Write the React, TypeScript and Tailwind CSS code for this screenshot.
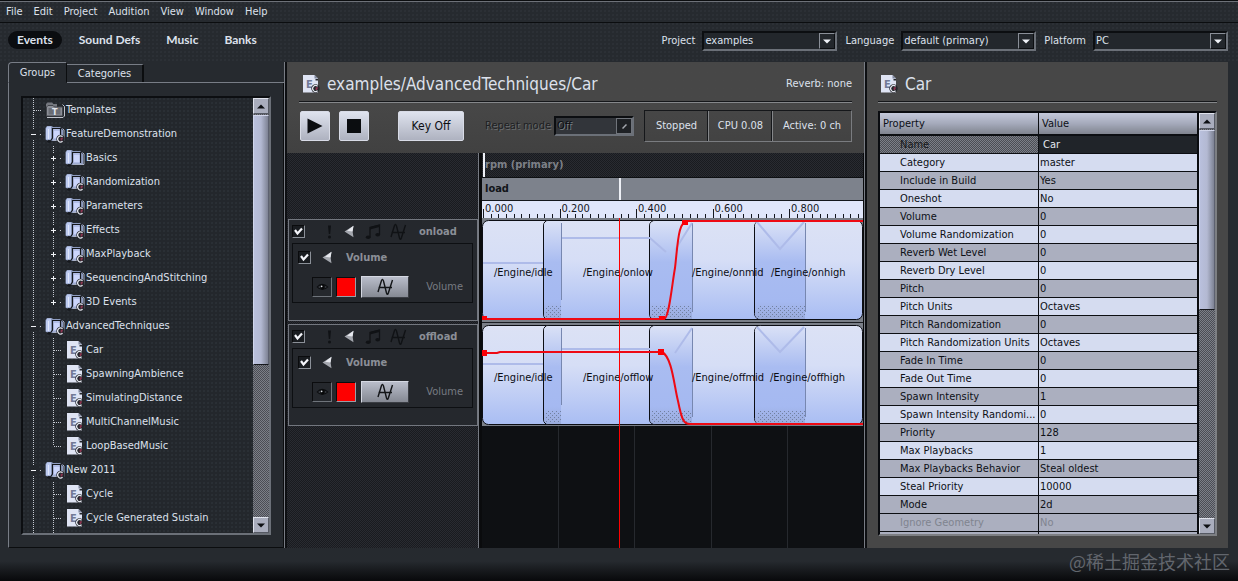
import React from "react";

const FONT = "font-['DejaVu_Sans_Condensed','DejaVu_Sans',sans-serif]";

const DOTS =
  "bg-[radial-gradient(circle_at_1px_1px,#2e3339_0.6px,transparent_0.9px)] bg-[length:4px_4px]";
const CHECKER =
  "bg-[repeating-conic-gradient(#4b4d54_0_25%,#7c7f88_0_50%)] bg-[length:2px_2px]";
const MESH =
  "bg-[repeating-conic-gradient(#191b1f_0_25%,#292b31_0_50%)] bg-[length:2px_2px]";
const SUNKEN =
  "border-2 border-t-[#0c0e11] border-l-[#0c0e11] border-r-[#6b7078] border-b-[#6b7078]";

/* ---------- icons ---------- */

function Badge({ x, y }: { x: number; y: number }) {
  return (
    <g transform={`translate(${x} ${y})`}>
      <circle cx="3.5" cy="3.5" r="4.2" fill="#23262b" />
      <path d="M5.6 1.2 A3 3 0 1 0 5.6 5.8" fill="none" stroke="#e4e6ee" strokeWidth="1.2" />
      <path d="M3.6 2.2 H6.2 L5 5 H3.6 Z" fill="#8c3550" />
    </g>
  );
}

function FolderIcon({ badge = true }: { badge?: boolean }) {
  return (
    <svg width="20" height="19" viewBox="0 0 20 19" aria-hidden="true" className="shrink-0">
      <path d="M0.5 3 L2 1 H6.5 L8 2 H15 L18 5 V16 H3 L0.5 14.5 Z" fill="#8d9bbf" />
      <path d="M1 3.5 L2.5 1.5 H6 V14.5 H1 Z" fill="#bccaf0" />
      <path d="M3.5 4 V14" stroke="#dfe6fb" />
      <path d="M7 4 H16 V14.5 H7 Z" fill="#b1bde6" />
      <path d="M9 6 H15 V13 H9 Z" fill="#cbd5fb" />
      <path d="M7 3.5 H16.5" stroke="#15181c" />
      <path d="M7.5 3 V13 L5.5 16 M15.5 4 V14" fill="none" stroke="#15181c" strokeWidth="1.2" />
      <ellipse cx="4" cy="16.3" rx="1.9" ry="1.4" fill="#15181c" />
      <path d="M17.5 3.5 L19 5 V15.5 H8" fill="none" stroke="#a9b1c6" />
      {badge && <Badge x={12} y={10.5} />}
    </svg>
  );
}

function TemplateIcon() {
  return (
    <svg width="20" height="19" viewBox="0 0 20 19" aria-hidden="true" className="shrink-0">
      <path d="M1 3 L2.5 1.5 H7 L8.5 3 H12 V12 H1 Z" fill="#74777e" />
      <path d="M1.5 6 L3 4.5 H8 L9.5 6 H17.5 V15 H1.5 Z" fill="#8c8f97" stroke="#42454b" />
      <path d="M3.5 7 H15.5 V13.5 H3.5 Z" fill="#6a6d74" />
      <path d="M2 16.5 H18 L19.5 15 V5.5 L17.5 3.5" fill="none" stroke="#c2c5cd" />
      <text x="7" y="13.5" fontSize="9" fontWeight="bold" fill="#e3e5ec">T</text>
    </svg>
  );
}

function EventIcon() {
  return (
    <svg width="18" height="20" viewBox="0 0 18 20" aria-hidden="true" className="shrink-0">
      <path d="M1 1 H12.5 L16 4.5 V18.5 H1 Z" fill="#dfe4f4" />
      <path d="M12.5 1 V4.5 H16 Z" fill="#7e859b" />
      <path d="M13.5 5 H16 V6.5 H13.5 Z" fill="#23262b" />
      <text x="4" y="14" fontSize="11" fontWeight="bold" fill="#727a96">E</text>
      <Badge x={10} y={11} />
    </svg>
  );
}

function WaveIcon({ color = "#131518" }: { color?: string }) {
  return (
    <svg width="17" height="18" viewBox="0 0 17 18" aria-hidden="true" className="shrink-0">
      <path
        d="M1 14 L4.5 2.5 Q5.5 0 6.5 3 L9.5 15 Q10.5 18 11.5 14.5 L15.5 2 M1.5 9.5 H15"
        fill="none"
        stroke={color}
        strokeWidth="1.4"
      />
    </svg>
  );
}

function SpeakerIcon() {
  return (
    <svg width="11" height="13" viewBox="0 0 11 13" aria-hidden="true" className="shrink-0">
      <path d="M0.5 6.5 L9.5 0.8 L8.6 6.5 L9.5 12.2 Z" fill="#a4a7ae" />
      <path d="M3 5.8 L9.5 0.8 L8.6 6.5 Z" fill="#e6e8ee" />
    </svg>
  );
}

function NotesIcon() {
  return (
    <svg width="17" height="16" viewBox="0 0 17 16" aria-hidden="true" className="shrink-0">
      <path d="M5 13 V3.5 L14.5 1 V10.5" fill="none" stroke="#101215" strokeWidth="1.3" />
      <path d="M5 3 L14.5 0.5 V3 L5 5.5 Z" fill="#101215" />
      <ellipse cx="3.2" cy="13.3" rx="2.4" ry="1.8" fill="#101215" />
      <ellipse cx="12.7" cy="10.8" rx="2.4" ry="1.8" fill="#101215" />
    </svg>
  );
}

function BangIcon() {
  return (
    <svg width="5" height="14" viewBox="0 0 5 14" aria-hidden="true" className="shrink-0">
      <path d="M1 0.5 H4 L3.2 9 H1.8 Z" fill="#101215" />
      <circle cx="2.5" cy="12" r="1.5" fill="#101215" />
    </svg>
  );
}

function EyeIcon() {
  return (
    <svg width="13" height="10" viewBox="0 0 13 10" aria-hidden="true">
      <path d="M0.5 5 Q6 -1.5 12.5 5 Q6 11 0.5 5 Z" fill="#0c0e10" />
      <path d="M2 5 Q6 1.5 11 5 Q6 8.5 2 5 Z" fill="#3a3e44" />
      <circle cx="6.5" cy="5" r="2.4" fill="#08090a" />
      <circle cx="5.6" cy="4.3" r="0.9" fill="#dfe3ea" />
    </svg>
  );
}

function Triangle({ up = false, color = "#0d0f13" }: { up?: boolean; color?: string }) {
  return (
    <svg width="8" height="5" viewBox="0 0 8 5" aria-hidden="true">
      <path d={up ? "M0 4.5 L4 0.5 L8 4.5 Z" : "M0 0.5 H8 L4 4.5 Z"} fill={color} />
    </svg>
  );
}

/* ---------- shared controls ---------- */

function Scrollbar({ thumb }: { thumb: string }) {
  const arrow =
    "flex h-4 w-full shrink-0 items-center justify-center border border-t-[#dfe2ec] border-l-[#dfe2ec] border-r-[#555963] border-b-[#555963] bg-[#a9adbd]";
  return (
    <div className={`flex w-4 shrink-0 flex-col ${CHECKER}`}>
      <button type="button" aria-label="Scroll up" className={arrow}>
        <Triangle up />
      </button>
      <div className="flex-1 pt-px">
        <div
          className={`${thumb} border border-l-[#d0d5ea] border-t-[#d0d5ea] border-r-[#5d6170] border-b-[#15171b] bg-linear-to-r from-[#b9c0dd] via-[#b3b9d2] to-[#7e8394]`}
        />
      </div>
      <button type="button" aria-label="Scroll down" className={arrow}>
        <Triangle />
      </button>
    </div>
  );
}

function Combo({ id, label, value }: { id: string; label: string; value: string }) {
  return (
    <div className="flex items-center gap-[7px]">
      <label htmlFor={id}>{label}</label>
      <div className={`relative h-5 w-[135px] bg-[#23272c] ${SUNKEN}`}>
        <select id={id} defaultValue={value} className="block h-4 w-full appearance-none bg-transparent pl-px leading-4 outline-none">
          <option className="bg-[#23272c]">{value}</option>
        </select>
        <span className="pointer-events-none absolute top-0 right-0 flex h-4 w-4 items-center justify-center border border-t-[#8a8f98] border-l-[#8a8f98] border-r-[#0c0e11] border-b-[#0c0e11] bg-[#23272c]">
          <Triangle color="#f0f2f8" />
        </span>
      </div>
    </div>
  );
}

function TickBox({ label }: { label: string }) {
  return (
    <span className="relative flex h-[13px] w-[13px] shrink-0">
      <input
        type="checkbox"
        defaultChecked
        aria-label={label}
        className="peer h-[13px] w-[13px] appearance-none border border-t-[#0a0b0d] border-l-[#0a0b0d] border-r-[#8b9098] border-b-[#8b9098] bg-[#191c20]"
      />
      <svg width="13" height="13" viewBox="0 0 13 13" aria-hidden="true" className="pointer-events-none absolute inset-0 hidden peer-checked:block">
        <path d="M3 5 L5.5 8.5 L10 3.5" fill="none" stroke="#f4f5fa" strokeWidth="2.2" />
      </svg>
    </span>
  );
}

/* ---------- left panel ---------- */

type Node = { name: string; level: 1 | 2; kind: "template" | "folder" | "plain" | "event"; last?: boolean };

const TREE: Node[] = [
  { name: "Templates", level: 1, kind: "template" },
  { name: "FeatureDemonstration", level: 1, kind: "folder" },
  { name: "Basics", level: 2, kind: "plain" },
  { name: "Randomization", level: 2, kind: "folder" },
  { name: "Parameters", level: 2, kind: "folder" },
  { name: "Effects", level: 2, kind: "folder" },
  { name: "MaxPlayback", level: 2, kind: "folder" },
  { name: "SequencingAndStitching", level: 2, kind: "folder" },
  { name: "3D Events", level: 2, kind: "folder", last: true },
  { name: "AdvancedTechniques", level: 1, kind: "folder" },
  { name: "Car", level: 2, kind: "event" },
  { name: "SpawningAmbience", level: 2, kind: "event" },
  { name: "SimulatingDistance", level: 2, kind: "event" },
  { name: "MultiChannelMusic", level: 2, kind: "event" },
  { name: "LoopBasedMusic", level: 2, kind: "event", last: true },
  { name: "New 2011", level: 1, kind: "folder" },
  { name: "Cycle", level: 2, kind: "event" },
  { name: "Cycle Generated Sustain", level: 2, kind: "event" },
  { name: "", level: 2, kind: "event" },
];

function Guide({ mark, last, stub = true }: { mark?: "+" | "-"; last?: boolean; stub?: boolean }) {
  return (
    <svg width="20" height="24" viewBox="0 0 20 24" aria-hidden="true" className="shrink-0">
      <path d={last ? "M8.5 0 V12" : "M8.5 0 V24"} stroke="#c4c8d0" strokeDasharray="1 1" />
      {stub && <path d="M9 12.5 H17" stroke="#c4c8d0" strokeDasharray="1 1" />}
      {mark && (
        <>
          <path d="M5 8 H14 V17 H5 Z" fill="#23272c" />
          <path d={mark === "+" ? "M6 12.5 H11 M8.5 10 V15" : "M6 12.5 H11"} stroke="#f0f2f6" />
        </>
      )}
    </svg>
  );
}

function TreeRow({ node }: { node: Node }) {
  const isEvent = node.kind === "event";
  const expandable = node.kind === "folder" || node.kind === "plain";
  return (
    <li className="flex h-6 shrink-0 items-center">
      {node.level === 2 && <Guide stub={false} />}
      <Guide
        mark={expandable ? (node.level === 1 ? "-" : "+") : undefined}
        last={node.last}
      />
      <span className={`flex w-5 shrink-0 ${isEvent ? "justify-center" : ""}`}>
        {node.kind === "template" ? <TemplateIcon /> : isEvent ? <EventIcon /> : <FolderIcon badge={node.kind !== "plain"} />}
      </span>
      {node.name && <a href="#" className="pl-px whitespace-nowrap">{node.name}</a>}
    </li>
  );
}

function GroupsPanel() {
  return (
    <aside className="flex w-[276px] shrink-0 flex-col">
      <div className="flex h-[21px] items-end" role="tablist">
        <button
          type="button"
          role="tab"
          aria-selected="true"
          className="h-[21px] w-[59px] rounded-tl-sm border border-t-[#787d86] border-l-[#787d86] border-r-[#0b0d0f] border-b-transparent"
        >
          Groups
        </button>
        <div className="flex h-[19px] flex-1 border-b border-[#787d86]">
          <button
            type="button"
            role="tab"
            aria-selected="false"
            className="h-[18px] w-[77px] border-t border-r-2 border-t-[#787d86] border-r-[#0b0d0f]"
          >
            Categories
          </button>
        </div>
      </div>
      <div className="flex min-h-0 flex-1 flex-col border border-t-0 border-l-[#787d86] border-r-[#0b0d0f] border-b-[#0b0d0f] px-3 pt-[13px] pb-3">
        <div className={`flex min-h-0 flex-1 bg-[#23272c] ${SUNKEN}`}>
          <ul className={`flex min-w-0 flex-1 flex-col overflow-hidden pl-[2px] ${DOTS}`}>
            {TREE.map((n) => (
              <TreeRow key={n.name} node={n} />
            ))}
          </ul>
          <Scrollbar thumb="h-[250px]" />
        </div>
      </div>
    </aside>
  );
}

/* ---------- centre panel ---------- */

function Track({ name }: { name: string }) {
  return (
    <section className="h-[102px] border border-[#73777f] bg-[#25282d] px-[3px]">
      <div className="flex h-[23px] items-center">
        <TickBox label={`Enable ${name}`} />
        <div className="flex flex-1 items-center pl-[22px]">
          <BangIcon />
          <span className="pl-3"><SpeakerIcon /></span>
          <span className="pl-[10px]"><NotesIcon /></span>
          <span className="pl-2"><WaveIcon color="#101215" /></span>
          <h3 className="pl-3 font-bold text-[#8b8f97]">{name}</h3>
        </div>
      </div>
      <div className="mr-px h-[60px] border border-[#0d0f12] px-[5px]">
        <div className="flex h-[27px] items-center">
          <TickBox label={`Enable ${name} volume`} />
          <span className="pr-[13px] pl-[11px]"><SpeakerIcon /></span>
          <span className="font-bold text-[#8b8f97]">Volume</span>
        </div>
        <div className="flex items-center pt-[5px] pl-[14px]">
          <button type="button" aria-label="Show envelope" className="flex h-5 w-5 items-center justify-center border border-t-[#0b0c0e] border-l-[#0b0c0e] border-r-[#6f747b] border-b-[#6f747b]">
            <EyeIcon />
          </button>
          <button type="button" aria-label="Envelope colour" className="ml-1 h-5 w-5 border border-t-[#0b0c0e] border-l-[#0b0c0e] border-r-[#9a9ea6] border-b-[#9a9ea6] bg-[#fe0000]" />
          <button type="button" aria-label="Edit envelope" className="ml-[5px] flex h-[22px] w-12 items-center justify-center border border-t-[#d5d8e2] border-l-[#d5d8e2] border-r-[#3a3d43] border-b-[#3a3d43] bg-linear-to-b from-[#b9bdca] to-[#858993]">
            <WaveIcon />
          </button>
          <span className="ml-auto pr-1 text-[#777b82]">Volume</span>
        </div>
      </div>
    </section>
  );
}

type Clip = { label: string; left: string };

function ClipLane({
  id,
  clips,
  soft,
  curve,
  handles,
}: {
  id: string;
  clips: Clip[];
  soft: string;
  curve: string;
  handles: [number, number][];
}) {
  return (
    <div className="relative h-[100px]">
      <svg className="block h-full w-full" viewBox="0 0 381 100" preserveAspectRatio="none" aria-hidden="true">
        <defs>
          <linearGradient id={`${id}-clip`} x1="0" y1="0" x2="0" y2="1">
            <stop offset="0" stopColor="#dce2f5" />
            <stop offset="0.4" stopColor="#d6def6" />
            <stop offset="1" stopColor="#a9bdf3" />
          </linearGradient>
          <linearGradient id={`${id}-fade`} x1="0" y1="0" x2="0" y2="1">
            <stop offset="0" stopColor="#dae1f6" />
            <stop offset="0.42" stopColor="#a9bcf1" />
            <stop offset="0.82" stopColor="#a5b9f1" />
            <stop offset="1" stopColor="#9aabdc" />
          </linearGradient>
          <pattern id={`${id}-dither`} width="4" height="4" patternUnits="userSpaceOnUse">
            <path d="M0 0.5 H1 M2 2.5 H3" stroke="#71809f" />
          </pattern>
        </defs>
        <rect width="381" height="100" fill="#7a7f88" />
        <rect x="0.5" y="0.5" width="80" height="99" rx="6" fill={`url(#${id}-clip)`} stroke="#0c0e14" />
        <path d="M61.5 6 Q61.5 0.5 67 0.5 H210 V99.5 H67 Q61.5 99.5 61.5 94 Z" fill={`url(#${id}-clip)`} stroke="#0c0e14" />
        <path d="M167.5 6 Q167.5 0.5 174 0.5 H323 V99.5 H174 Q167.5 99.5 167.5 94 Z" fill={`url(#${id}-clip)`} stroke="#0c0e14" />
        <rect x="272.5" y="0.5" width="108" height="99" rx="6" fill={`url(#${id}-clip)`} stroke="#0c0e14" />
        <path d="M62 6 Q62 1 67 1 H79 V99 H67 Q62 99 62 94 Z" fill={`url(#${id}-fade)`} />
        <path d="M168 6 Q168 1 174 1 H210 V99 H174 Q168 99 168 94 Z" fill={`url(#${id}-fade)`} />
        <path d="M273 6 Q273 1 279 1 H323 V99 H279 Q273 99 273 94 Z" fill={`url(#${id}-fade)`} />
        <path d="M64 86 H79 V97 H64 Z M170 86 H209 V97 H170 Z M276 86 H323 V97 H276 Z" fill={`url(#${id}-dither)`} />
        <path d="M79.5 3 V80 M210.5 3 V92 M323.5 3 V92" stroke="#7787b0" fill="none" />
        <path d={soft} fill="none" stroke="#aebbe9" strokeWidth="2" />
        <path d={curve} fill="none" stroke="#ee0a14" strokeWidth="2" />
        {handles.map(([x, y]) => (
          <rect key={`${x}-${y}`} x={x - 3} y={y - 3} width="6" height="6" fill="#fb0007" />
        ))}
      </svg>
      {clips.map((c) => (
        <span
          key={c.label}
          className="absolute top-[45px] leading-4 whitespace-nowrap text-[#0b0d14]"
          style={{ left: c.left }}
        >
          {c.label}
        </span>
      ))}
    </div>
  );
}

const at = (x: number) => `${(x / 381) * 100}%`;

const MAJORS = ["0.000", "0.200", "0.400", "0.600", "0.800"];

function Ruler() {
  return (
    <div className="relative h-[18px] shrink-0 border-t border-[#14171c] bg-[#e0e6fa] text-[#14171f]">
      <svg className="block h-full w-full" viewBox="0 0 381 17" preserveAspectRatio="none" aria-hidden="true">
        {Array.from({ length: 50 }, (_, i) => (
          <path
            key={i}
            d={`M${Math.round(i * 7.65) + 1.5} ${i % 10 === 0 ? 8 : 13} V17`}
            stroke="#14171f"
          />
        ))}
      </svg>
      {MAJORS.map((m, i) => (
        <span key={m} className="absolute top-0 pl-[3px] leading-4" style={{ left: at(i * 76.5) }}>
          {m}
        </span>
      ))}
    </div>
  );
}

function Timeline() {
  return (
    <div className="relative flex min-w-0 flex-1 flex-col">
      <div className={`flex h-6 shrink-0 items-center ${MESH}`}>
        <span className="ml-px h-full w-[2px] bg-[#eef0f6]" />
        <span className="font-bold text-[#7d8088]">rpm (primary)</span>
      </div>
      <div className="relative flex h-[23px] shrink-0 items-center border-t border-[#0d0f12] bg-[#7d828c] pl-[3px] font-bold text-[#12151a]">
        load
        <span className="absolute inset-y-0 w-[2px] bg-[#eef0f6]" style={{ left: at(137) }} />
      </div>
      <Ruler />
      <div className="shrink-0 bg-[#7a7f88] pt-[2px]">
        <ClipLane
          id="on"
          clips={[
            { label: "/Engine/idle", left: at(12) },
            { label: "/Engine/onlow", left: at(101) },
            { label: "/Engine/onmid", left: at(210) },
            { label: "/Engine/onhigh", left: at(289) },
          ]}
          soft="M1 43 H61 M80 18 H168 L184 32 M193 30 L210 3 M275 2 L298 29 L322 2"
          curve="M1 99 H182 C187 99 190 64 193 48 C196 22 196 1 206 1 H381"
          handles={[[2, 99], [180, 99], [203, 2]]}
        />
        <div className="my-[2px] h-px bg-[#1a1d22]" />
        <ClipLane
          id="off"
          clips={[
            { label: "/Engine/idle", left: at(12) },
            { label: "/Engine/offlow", left: at(101) },
            { label: "/Engine/offmid", left: at(210) },
            { label: "/Engine/offhigh", left: at(288) },
          ]}
          soft="M1 39 H61 M80 24 H168 M193 28 L210 3 M275 2 L298 27 L322 2"
          curve="M1 28 H15 L18 27 H180 C190 32 192 60 196 76 C200 96 202 99 208 99 H381"
          handles={[[2, 28], [179, 27]]}
        />
        <div className="h-px bg-[#7a7f88]" />
      </div>
      <div className="min-h-0 flex-1 bg-[#0e1013]">
        <svg className="block h-full w-full" viewBox="0 0 381 122" preserveAspectRatio="none" aria-hidden="true">
          <path d="M76.5 0 V122 M152.5 0 V122 M229.5 0 V122 M305.5 0 V122" stroke="#26292e" />
        </svg>
      </div>
      <div
        className="pointer-events-none absolute top-[65px] bottom-0 z-10 border-l border-[#ff0000]"
        style={{ left: at(137) }}
      />
    </div>
  );
}

function Editor() {
  const light =
    "flex items-center justify-center rounded-xs border border-[#d8dbe6] bg-linear-to-b from-[#dfe3ee] to-[#aeb2c0] text-[#0d0f13]";
  return (
    <main className="flex min-w-0 flex-1 flex-col">
      <header className="flex h-[91px] shrink-0 flex-col bg-linear-to-b from-[#474747] via-[#474747] to-[#414141] px-3">
        <div className="flex h-10 shrink-0 items-center border-b border-[#15171a] pt-1 pl-[3px]">
          <EventIcon />
          <h1 className="pl-[7px] text-[17px] leading-5">examples/AdvancedTechniques/Car</h1>
          <span className="ml-auto">Reverb: none</span>
        </div>
        <div className="flex h-[51px] items-start border-t border-[#85878a] pt-[7px] pl-px">
          <div className="flex h-8 flex-1 items-center">
            <button type="button" aria-label="Play" className={`${light} h-[30px] w-[30px]`}>
              <svg width="16" height="16" viewBox="0 0 16 16" aria-hidden="true"><path d="M0.5 0.5 L15.5 8 L0.5 15.5 Z" fill="#0b0d10" /></svg>
            </button>
            <button type="button" aria-label="Stop" className={`${light} ml-[9px] h-[30px] w-[30px]`}>
              <span className="h-[14px] w-[14px] bg-[#0b0d10]" />
            </button>
            <button type="button" className={`${light} ml-[29px] h-[30px] w-[66px] text-[12px]`}>Key Off</button>
            <label htmlFor="repeat" className="ml-[21px] whitespace-nowrap text-[#1d1f22] [text-shadow:1px_1px_0_#6a6c6f]">Repeat mode</label>
            <div className={`relative ml-[3px] h-5 w-20 bg-[#32353a] ${SUNKEN}`}>
              <select id="repeat" disabled className="block h-4 w-full appearance-none bg-transparent pl-px leading-4 text-[#0b0d10] opacity-100 [text-shadow:1px_1px_0_#7c8086]">
                <option>Off</option>
              </select>
              <span className="pointer-events-none absolute top-0 right-0 flex h-4 w-4 items-center justify-center border border-[#70747b] bg-[#1e2125]">
                <svg width="5" height="5" viewBox="0 0 5 5" aria-hidden="true"><path d="M0.5 4.5 L4.5 0.5" stroke="#a5a9b0" strokeWidth="1.5" /></svg>
              </span>
            </div>
            <dl className="ml-auto flex h-8 border border-t-[#15171a] border-l-[#15171a] border-r-[#7a7c80] border-b-[#7a7c80]">
              <div className="flex w-[63px] items-center justify-center">Stopped</div>
              <div className="flex w-[64px] items-center justify-center border-l border-[#85878a] shadow-[-1px_0_0_#15171a]">CPU 0.08</div>
              <div className="flex w-[79px] items-center justify-center border-l border-[#85878a] shadow-[-1px_0_0_#15171a]">Active: 0 ch</div>
            </dl>
          </div>
        </div>
      </header>
      <div className="flex min-h-0 flex-1">
        <div className={`flex w-[191px] shrink-0 flex-col gap-[3px] pt-[66px] pl-px ${MESH}`}>
          <Track name="onload" />
          <Track name="offload" />
        </div>
        <div className="w-1 shrink-0 border-r-2 border-l border-l-[#787c84] border-r-[#0a0b0d] bg-[#0a0b0d]" />
        <Timeline />
        <div className="w-px bg-[#0a0b0d]" />
      </div>
    </main>
  );
}

/* ---------- right panel ---------- */

const PROPERTIES: [string, string][] = [
  ["Category", "master"],
  ["Include in Build", "Yes"],
  ["Oneshot", "No"],
  ["Volume", "0"],
  ["Volume Randomization", "0"],
  ["Reverb Wet Level", "0"],
  ["Reverb Dry Level", "0"],
  ["Pitch", "0"],
  ["Pitch Units", "Octaves"],
  ["Pitch Randomization", "0"],
  ["Pitch Randomization Units", "Octaves"],
  ["Fade In Time", "0"],
  ["Fade Out Time", "0"],
  ["Spawn Intensity", "1"],
  ["Spawn Intensity Randomi...", "0"],
  ["Priority", "128"],
  ["Max Playbacks", "1"],
  ["Max Playbacks Behavior", "Steal oldest"],
  ["Steal Priority", "10000"],
  ["Mode", "2d"],
];

function PropertySheet() {
  const head = "h-[22px] border-b-2 border-[#0c0e12] bg-linear-to-b from-[#c3c8da] via-[#a5aabb] to-[#80848f] text-left font-normal";
  return (
    <aside className="flex w-[361px] shrink-0 flex-col bg-[#474747] px-[11px] pb-3">
      <div className="flex h-10 shrink-0 items-center border-b border-[#15171a] pt-1 pl-[2px]">
        <EventIcon />
        <h2 className="pl-[7px] text-[17px] leading-5">Car</h2>
      </div>
      <div className="h-[9px] shrink-0 border-t border-[#85878a]" />
      <div className="flex min-h-0 flex-1 border-2 border-t-[#0a0c10] border-l-[#0a0c10] border-r-[#7d7f83] border-b-[#7d7f83] bg-[#0a0c10]">
        <div className="min-w-0 flex-1 overflow-hidden pr-[2px]">
          <table className="w-full table-fixed border-collapse text-[#0d1016]">
            <thead>
              <tr>
                <th scope="col" className={`${head} border-r pl-[3px]`}>Property</th>
                <th scope="col" className={`${head} pl-[3px]`}>Value</th>
              </tr>
            </thead>
            <tbody>
              <tr className="h-[18px]">
                <td className={`h-[18px] border-r border-b border-[#0c0e12] p-0 pl-5 leading-[17px] text-[#15171b] ${CHECKER}`}>
                  <label htmlFor="event-name">Name</label>
                </td>
                <td className="h-[18px] border-b border-[#0c0e12] bg-[#202429] p-0">
                  <input id="event-name" defaultValue="Car" className="block h-[17px] w-full bg-transparent pl-1 text-[#e4e7f0] outline-none" />
                </td>
              </tr>
              {PROPERTIES.map(([k, v]) => (
                <tr key={k} className="h-[18px] odd:bg-[#abafbf] even:bg-[#d5dcf0]">
                  <td className="h-[18px] border-r border-b border-[#0c0e12] p-0 pl-5 leading-[17px] whitespace-nowrap">{k}</td>
                  <td className="h-[18px] border-b border-[#0c0e12] p-0 pl-px leading-[17px]">{v}</td>
                </tr>
              ))}
              <tr className="h-[18px] bg-[#abafbf] text-[#80848f]">
                <td className="h-[18px] border-r border-b border-[#0c0e12] p-0 pl-5 leading-[17px]">Ignore Geometry</td>
                <td className="h-[18px] border-b border-[#0c0e12] p-0 pl-px leading-[17px]">No</td>
              </tr>
              <tr className="h-[18px] bg-[#abafbf]">
                <td className="border-r border-[#0c0e12] p-0" />
                <td className="p-0" />
              </tr>
            </tbody>
          </table>
        </div>
        <Scrollbar thumb="h-[180px]" />
      </div>
    </aside>
  );
}

/* ---------- window ---------- */

export default function App() {
  const menus = ["File", "Edit", "Project", "Audition", "View", "Window", "Help"];
  const sections = ["Events", "Sound Defs", "Music", "Banks"];
  return (
    <div className={`flex h-screen flex-col overflow-hidden border-t border-[#0b0d0f] bg-[#262a2f] text-[11px] leading-4 text-[#dde1ec] ${FONT}`}>
      <nav className={`flex h-[22px] shrink-0 items-center gap-[11px] border-t border-b border-t-[#6d7178] border-b-[#0b0d0f] pl-[6px] ${DOTS}`}>
        {menus.map((m) => (
          <button key={m} type="button">{m}</button>
        ))}
      </nav>
      <div className={`flex h-[39px] shrink-0 items-start justify-between pt-2 pr-[10px] pl-2 ${DOTS}`}>
        <div className="flex gap-2 font-['Lato','Open_Sans',sans-serif] text-[12px] font-bold">
          {sections.map((s, i) => (
            <button
              key={s}
              type="button"
              className={i === 0 ? "h-[18px] rounded-full bg-[#0b0d10] px-[9px]" : "h-[18px] px-[9px]"}
            >
              {s}
            </button>
          ))}
        </div>
        <div className="flex items-center gap-2">
          <Combo id="project" label="Project" value="examples" />
          <Combo id="language" label="Language" value="default (primary)" />
          <Combo id="platform" label="Platform" value="PC" />
        </div>
      </div>
      <div className="flex min-h-0 flex-1 pr-[10px] pl-2">
        <GroupsPanel />
        <div className="w-[3px] shrink-0 border-l border-[#787c84] bg-[#0d0f12]" />
        <Editor />
        <div className="w-[3px] shrink-0 border-l border-[#787c84] bg-[#0d0f12]" />
        <PropertySheet />
      </div>
      <footer className="flex h-[33px] shrink-0 items-center justify-end bg-linear-to-b from-[#262a2f] from-40% to-[#08090b] pr-2 pb-2 font-['Noto_Sans_CJK_SC',sans-serif] text-[18px] text-[#62666d]">
        @稀土掘金技术社区
      </footer>
    </div>
  );
}
